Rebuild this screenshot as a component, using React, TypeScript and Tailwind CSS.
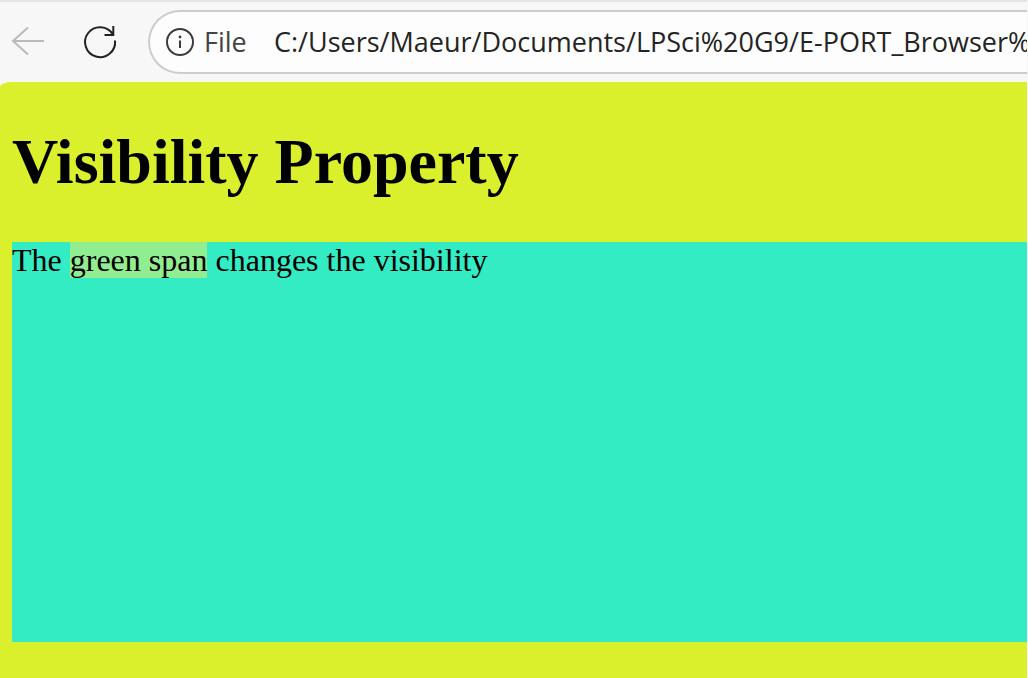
export default function App() {
  return (
    <div className="flex min-h-screen flex-col overflow-hidden border-r border-[#f7f7f7] bg-[#f7f7f7]">
      <header className="flex h-[82px] items-center border-t-2 border-[#e5e5e5] font-['Open_Sans',sans-serif]">
        <button type="button" aria-label="Back" className="ml-2 flex size-10 shrink-0 items-center justify-center text-[#bababa]">
          <svg width="40" height="40" viewBox="0 0 40 40" fill="none" stroke="currentColor" strokeWidth="2">
            <path d="M36 19H5M20 5.5L5 19L20 32.5" />
          </svg>
        </button>
        <button type="button" aria-label="Refresh" className="ml-8 flex size-10 shrink-0 items-center justify-center text-[#222222]">
          <svg width="40" height="40" viewBox="0 0 40 40" fill="none" stroke="currentColor" strokeWidth="2">
            <path d="M35 18.5A15 15 0 1 1 33 12.5M33.3 4V13H24.5" />
          </svg>
        </button>
        <div className="ml-7 flex h-16 min-w-0 flex-1 items-center overflow-hidden rounded-l-full border-2 border-r-0 border-[#cccccc] bg-[#fdfdfd] pl-4">
          <svg className="shrink-0 text-[#3b3b3b]" width="28" height="28" viewBox="0 0 28 28" fill="none" stroke="currentColor" strokeWidth="2">
            <circle cx="14" cy="14" r="13" />
            <path d="M14 12.5V20" />
            <circle cx="14" cy="9" r="1.4" fill="currentColor" stroke="none" />
          </svg>
          <label htmlFor="address" className="ml-[10px] w-[70px] shrink-0 text-[27px] text-[#444444]">
            File
          </label>
          <input
            id="address"
            type="text"
            defaultValue="C:/Users/Maeur/Documents/LPSci%20G9/E-PORT_Browser%20"
            className="min-w-0 flex-1 bg-transparent text-[27px] text-[#242424] outline-none"
          />
        </div>
      </header>
      <main className="flex-1 rounded-tl-[12px_5px] bg-[#daf02c] pl-3 font-['Liberation_Serif',serif] text-black">
        <h1 className="pt-[43px] pb-[43px] text-[64px] leading-[74px] font-bold">Visibility Property</h1>
        <div className="h-[400px] bg-[#33ecc3] text-[32px] leading-9">
          The <span className="bg-[#90ee90]">green span</span> changes the visibility
        </div>
      </main>
    </div>
  );
}
